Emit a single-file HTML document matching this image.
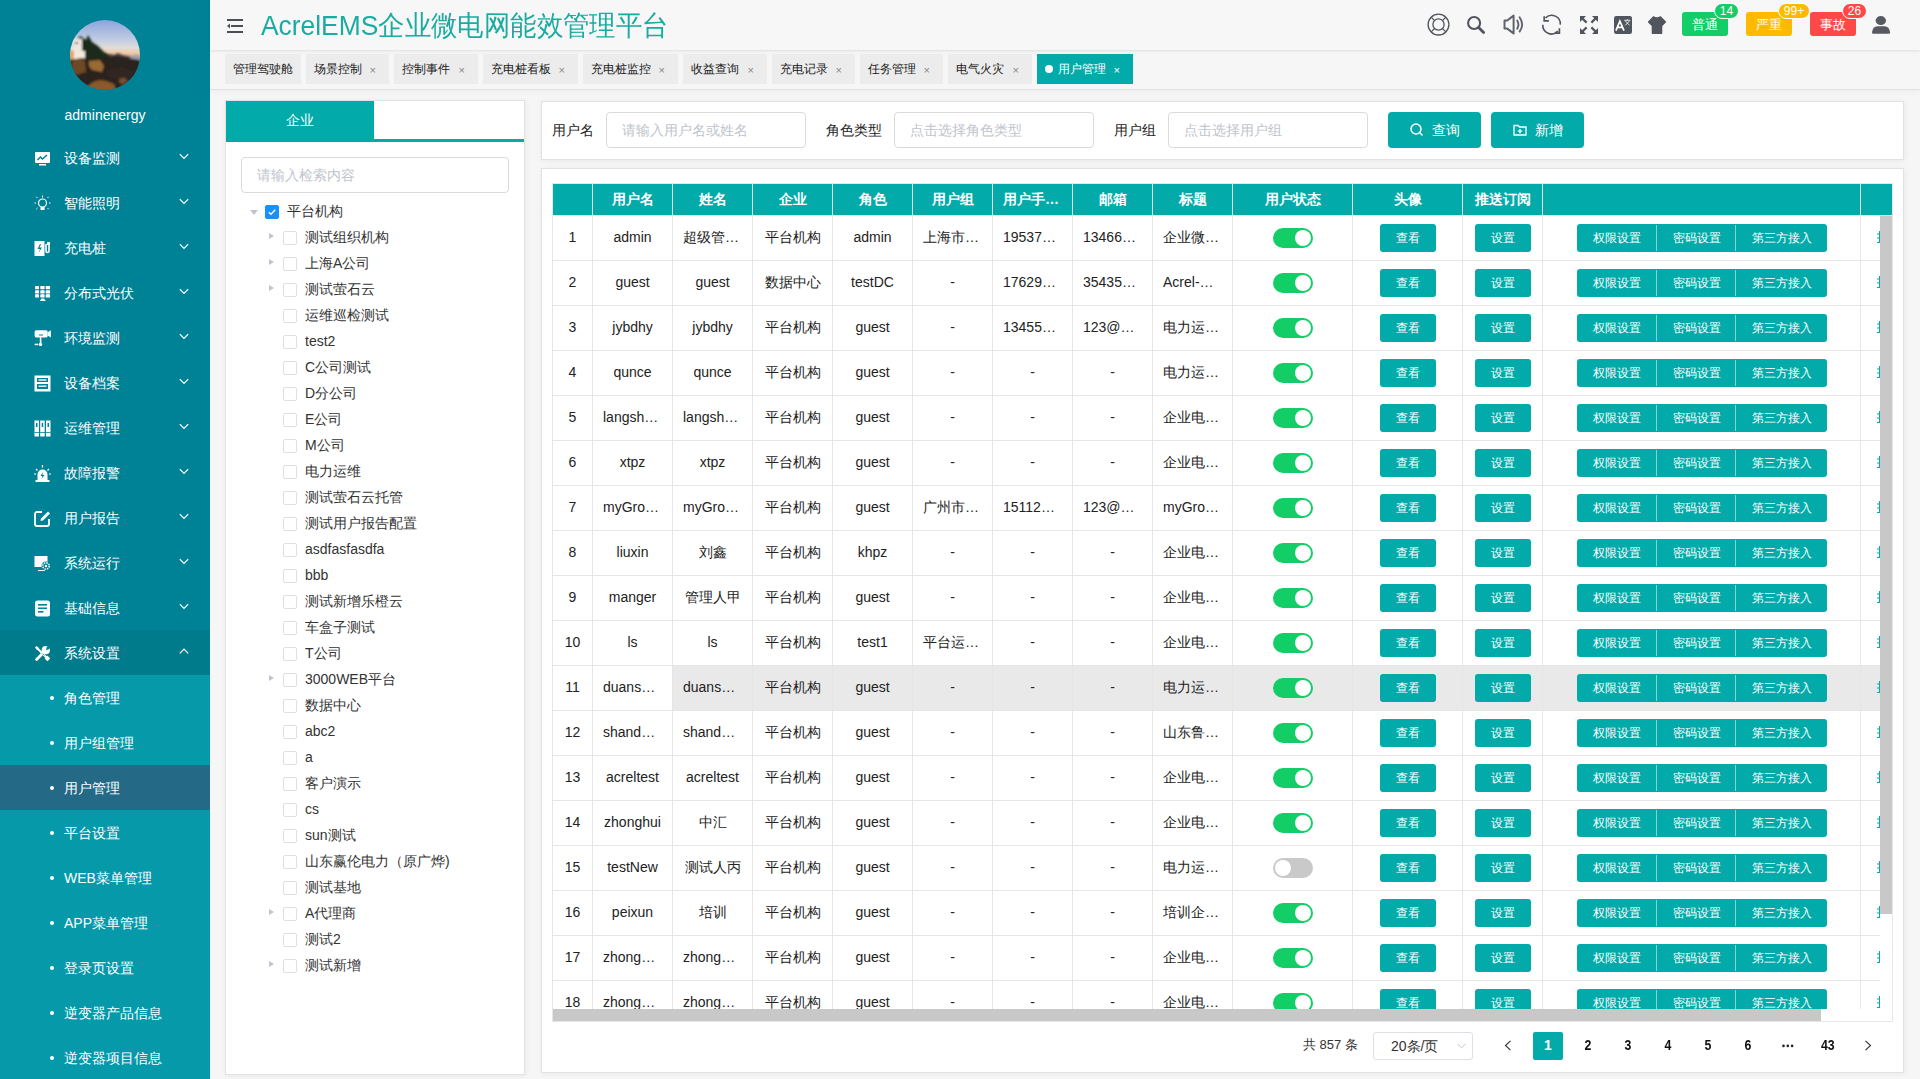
<!DOCTYPE html><html><head><meta charset="utf-8"><style>
*{box-sizing:border-box;margin:0;padding:0}
html,body{width:1920px;height:1079px;overflow:hidden}
body{position:relative;background:#f6f6f6;font-family:"Liberation Sans",sans-serif;color:#222}
.abs{position:absolute}
#side{position:absolute;left:0;top:0;width:210px;height:1079px;background:#008296;color:#fff}
#avatar{position:absolute;left:70px;top:20px;width:70px;height:70px;border-radius:50%;overflow:hidden}
#uname{position:absolute;left:0;width:210px;top:105px;text-align:center;font-size:14px;line-height:20px;color:#fff}
.mi{position:absolute;left:0;width:210px;height:45px;font-size:14px;line-height:45px;color:#fff}
.mi .ic{position:absolute;left:34px;top:15px;width:17px;height:17px}
.mi .tx{position:absolute;left:64px;top:1px}
.mi .chev{position:absolute;left:179px;top:18px;width:10px;height:7px}
.sub{position:absolute;left:0;width:210px;height:45px;font-size:14px;line-height:45px;color:#fff}
.sub .dot{position:absolute;left:50px;top:21px;width:4px;height:4px;border-radius:50%;background:#fff}
.sub .tx{position:absolute;left:64px;top:1px}
#header{position:absolute;left:210px;top:0;width:1710px;height:50px;background:#f7f7f7;box-shadow:0 1px 3px rgba(0,0,0,.10);z-index:2}
#title{position:absolute;left:51px;top:7px;font-size:28px;line-height:38px;color:#1aaba1;white-space:nowrap;transform:scaleX(0.942);transform-origin:0 0}
#tabs{position:absolute;left:210px;top:50px;width:1710px;height:40px;background:#f6f6f6;border-bottom:1px solid #e0e0e0;box-shadow:0 2px 6px rgba(0,0,0,.04)}
.tab{position:absolute;top:4px;height:30px;background:#ececec;font-size:12px;line-height:30px;color:#1a1a1a;padding-left:8px;white-space:nowrap}
.tab .x{position:absolute;right:13px;top:1px;font-size:11px;color:#888}
.tab.act{background:#02aba9;color:#fff}
.tab.act .x{color:#fff}
.panel{position:absolute;background:#fff;border:1px solid #e2e2e2;box-shadow:1px 1px 6px rgba(0,0,0,.06)}
.lbl{position:absolute;font-size:14px;line-height:20px;color:#222;margin-top:1px}
.inp{position:absolute;height:36px;border:1px solid #dadada;border-radius:4px;background:#fff;font-size:14px;line-height:34px;color:#c0c4cc;padding-left:15px}
.btn{position:absolute;height:36px;border-radius:4px;background:#02aba9;color:#fff;font-size:14px;line-height:36px}
table{border-collapse:collapse;table-layout:fixed}
.tree-row{position:absolute;left:0;height:26px;font-size:14px;line-height:26px;color:#333;white-space:nowrap}
.cb{position:absolute;width:14px;height:14px;border:1px solid #dcdfe6;border-radius:2px;background:#fff}
.td{position:absolute;height:44px;line-height:42px;text-align:center;font-size:14px;color:#222;white-space:nowrap;overflow:hidden}
.sw{position:absolute;width:40px;height:20px;border-radius:10px}
.sw span{position:absolute;top:2px;width:16px;height:16px;border-radius:50%;background:#fff}
.tb{position:absolute;height:28px;border-radius:3px;background:#02aba9;color:#fff;font-size:12px;line-height:29px;text-align:center}
.arr{position:absolute;width:0;height:0;border-top:3.5px solid transparent;border-bottom:3.5px solid transparent;border-left:5px solid #c0c4cc}
</style></head><body>
<div id="side">
<div id="avatar"><svg width="70" height="70" viewBox="0 0 70 70">
<defs><linearGradient id="sky" x1="0" y1="0" x2="0" y2="1"><stop offset="0" stop-color="#8aa4dc"/><stop offset="0.3" stop-color="#c4cfe2"/><stop offset="0.4" stop-color="#e2dcd8"/><stop offset="0.47" stop-color="#f0c9a4"/><stop offset="0.53" stop-color="#d9a890"/><stop offset="0.6" stop-color="#6a5a58"/></linearGradient>
<filter id="bl" x="-10%" y="-10%" width="120%" height="120%"><feGaussianBlur stdDeviation="1.1"/></filter></defs>
<rect width="70" height="70" fill="url(#sky)"/>
<g filter="url(#bl)">
<path d="M30 37 L40 34 L44 35 L48 33 L52 35 L62 37 L70 37 L70 42 L30 42Z" fill="#4a4040"/>
<path d="M60 37 L66 35 L70 36 L70 41 L60 41Z" fill="#9aa0b0"/>
<path d="M6 22 L10 16 L16 20 L18 15 L22 22 L28 26 L32 30 L34 32 L38 34 L40 38 L20 44 L8 42Z" fill="#1e2a1c"/>
<rect x="3" y="19" width="9" height="13" fill="#eee6dc"/>
<rect x="5" y="22" width="3" height="2" fill="#667"/>
<rect x="0" y="31" width="15" height="10" fill="#f2e8dc"/>
<rect x="0" y="31" width="4" height="10" fill="#e8a060"/>
<path d="M0 40 L12 38 L22 40 L34 38 L46 36 L58 38 L70 40 L70 70 L0 70Z" fill="#2a211c"/>
<path d="M2 42 Q8 36 15 41 L16 52 L6 55 L2 50Z" fill="#6e4826"/>
<path d="M19 41 L30 40 L34 46 L32 52 L22 50 L19 46Z" fill="#9a6a34"/>
<path d="M18 66 Q26 58 36 61 L44 64 L46 70 L18 70Z" fill="#8a5a2c"/>
<path d="M48 60 L54 57 L58 61 L52 65Z" fill="#7a5030"/>
<path d="M36 50 L52 47 L64 52 L60 58 L40 58Z" fill="#302822"/>
</g>
</svg></div>
<div id="uname">adminenergy</div>
<div class="mi" style="top:135px;"><svg class="ic" viewBox="0 0 17 17"><rect x="1" y="2" width="15" height="11" rx="1" fill="#fff"/><rect x="5" y="14" width="7" height="1.5" fill="#fff"/><path d="M3.5 10 L6.5 7 L8.5 9 L13 5" stroke="#008296" stroke-width="1.5" fill="none"/></svg><span class="tx">设备监测</span><svg class="chev" viewBox="0 0 10 7"><path d="M0.8 1.2 L5 5.4 L9.2 1.2" stroke="#fff" stroke-width="1.2" fill="none"/></svg></div>
<div class="mi" style="top:180px;"><svg class="ic" viewBox="0 0 17 17"><circle cx="8.5" cy="8" r="4" stroke="#fff" stroke-width="1.2" fill="none"/><rect x="6.5" y="12" width="4" height="3" fill="#fff"/><path d="M8.5 0.5v2M2 8H0.5M16.5 8H15M3.5 3L2.3 1.8M13.5 3l1.2-1.2M3.5 13l-1.2 1.2M13.5 13l1.2 1.2" stroke="#fff" stroke-width="1"/></svg><span class="tx">智能照明</span><svg class="chev" viewBox="0 0 10 7"><path d="M0.8 1.2 L5 5.4 L9.2 1.2" stroke="#fff" stroke-width="1.2" fill="none"/></svg></div>
<div class="mi" style="top:225px;"><svg class="ic" viewBox="0 0 17 17"><rect x="0.5" y="1" width="10" height="15" fill="#fff"/><path d="M6 4 L3.5 9 H6 L4.5 13 L8 7.5 H5.5 L7 4Z" fill="#008296"/><path d="M12 4v7a1.5 1.5 0 0 0 3 0V5" stroke="#fff" stroke-width="1.6" fill="none"/><rect x="13" y="2" width="3" height="3" fill="#fff"/></svg><span class="tx">充电桩</span><svg class="chev" viewBox="0 0 10 7"><path d="M0.8 1.2 L5 5.4 L9.2 1.2" stroke="#fff" stroke-width="1.2" fill="none"/></svg></div>
<div class="mi" style="top:270px;"><svg class="ic" viewBox="0 0 17 17"><g fill="#fff"><rect x="1.1" y="1" width="3.9" height="3.2" rx="0.6"/><rect x="6.3" y="1" width="4.3" height="3.2" rx="0.6"/><rect x="11.7" y="1" width="4.4" height="3.2" rx="0.6"/><rect x="1.1" y="5.3" width="3.9" height="3.2" rx="0.6"/><rect x="6.3" y="5.3" width="4.3" height="3.2" rx="0.6"/><rect x="11.7" y="5.3" width="4.4" height="3.2" rx="0.6"/><rect x="1.1" y="9.3" width="3.9" height="3.2" rx="0.6"/><rect x="6.3" y="9.3" width="4.3" height="3.2" rx="0.6"/><rect x="11.7" y="9.3" width="4.4" height="3.2" rx="0.6"/><path d="M7.5 13.6 H10 L11.8 16 H5.8Z"/></g></svg><span class="tx">分布式光伏</span><svg class="chev" viewBox="0 0 10 7"><path d="M0.8 1.2 L5 5.4 L9.2 1.2" stroke="#fff" stroke-width="1.2" fill="none"/></svg></div>
<div class="mi" style="top:315px;"><svg class="ic" viewBox="0 0 17 17"><g fill="#fff"><rect x="0.6" y="0.3" width="13.1" height="7.1" rx="1.6"/><path d="M13.7 2.2 L16.9 0.3 V7.4 L13.7 5.5Z"/><rect x="5.8" y="7.4" width="1.6" height="6"/><circle cx="6.5" cy="14.4" r="1.7"/><rect x="0.6" y="13.7" width="3.7" height="1.5"/></g><rect x="5" y="4.5" width="4" height="1" fill="#008296"/></svg><span class="tx">环境监测</span><svg class="chev" viewBox="0 0 10 7"><path d="M0.8 1.2 L5 5.4 L9.2 1.2" stroke="#fff" stroke-width="1.2" fill="none"/></svg></div>
<div class="mi" style="top:360px;"><svg class="ic" viewBox="0 0 17 17"><rect x="0.5" y="0.5" width="16" height="16" fill="#fff"/><rect x="3" y="3" width="11" height="4" fill="#008296"/><rect x="4.5" y="4.3" width="8" height="1.4" fill="#fff"/><rect x="3" y="9" width="11" height="5" fill="#008296"/><rect x="4.5" y="10.5" width="8" height="1.3" fill="#fff"/></svg><span class="tx">设备档案</span><svg class="chev" viewBox="0 0 10 7"><path d="M0.8 1.2 L5 5.4 L9.2 1.2" stroke="#fff" stroke-width="1.2" fill="none"/></svg></div>
<div class="mi" style="top:405px;"><svg class="ic" viewBox="0 0 17 17"><g fill="#fff"><rect x="0.5" y="0.5" width="4.5" height="16"/><rect x="6.2" y="0.5" width="4.5" height="16"/><rect x="12" y="0.5" width="4.5" height="16"/></g><g fill="#008296"><rect x="2" y="3" width="1.5" height="4"/><rect x="7.7" y="3" width="1.5" height="4"/><rect x="13.5" y="3" width="1.5" height="4"/><rect x="0.5" y="12" width="16" height="0.8"/></g></svg><span class="tx">运维管理</span><svg class="chev" viewBox="0 0 10 7"><path d="M0.8 1.2 L5 5.4 L9.2 1.2" stroke="#fff" stroke-width="1.2" fill="none"/></svg></div>
<div class="mi" style="top:450px;"><svg class="ic" viewBox="0 0 17 17"><path d="M3.5 16V9.5a5 5 0 0 1 10 0V16Z" fill="#fff"/><rect x="1.5" y="15" width="14" height="2" fill="#fff"/><path d="M9 7 L6.5 11 H8.5 L7.5 14 L10.5 10 H8.5Z" fill="#008296"/><path d="M8.5 0v2.5M2 4l1.5 1.5M15 4l-1.5 1.5M0 9h2M15 9h2" stroke="#fff" stroke-width="1.2"/></svg><span class="tx">故障报警</span><svg class="chev" viewBox="0 0 10 7"><path d="M0.8 1.2 L5 5.4 L9.2 1.2" stroke="#fff" stroke-width="1.2" fill="none"/></svg></div>
<div class="mi" style="top:495px;"><svg class="ic" viewBox="0 0 17 17"><path d="M8 2H3a2 2 0 0 0-2 2v10a2 2 0 0 0 2 2h10a2 2 0 0 0 2-2V9" stroke="#fff" stroke-width="1.8" fill="none"/><path d="M14 1.5 L16 3.5 L9 10.5 L6.5 11 L7 8.5Z" fill="#fff"/></svg><span class="tx">用户报告</span><svg class="chev" viewBox="0 0 10 7"><path d="M0.8 1.2 L5 5.4 L9.2 1.2" stroke="#fff" stroke-width="1.2" fill="none"/></svg></div>
<div class="mi" style="top:540px;"><svg class="ic" viewBox="0 0 17 17"><rect x="0.5" y="1" width="13" height="11" fill="#fff"/><rect x="4" y="15" width="7" height="1" fill="#fff"/><circle cx="12" cy="11" r="4.5" fill="#008296"/><circle cx="12" cy="11" r="3.2" stroke="#fff" stroke-width="1.4" fill="none" stroke-dasharray="1.5 1"/><circle cx="12" cy="11" r="1.2" fill="#fff"/></svg><span class="tx">系统运行</span><svg class="chev" viewBox="0 0 10 7"><path d="M0.8 1.2 L5 5.4 L9.2 1.2" stroke="#fff" stroke-width="1.2" fill="none"/></svg></div>
<div class="mi" style="top:585px;"><svg class="ic" viewBox="0 0 17 17"><rect x="1" y="0.5" width="15" height="16" rx="2.5" fill="#fff"/><g fill="#008296"><rect x="4" y="4" width="9" height="1.6"/><rect x="4" y="7.5" width="9" height="1.6"/><rect x="4" y="11" width="5.5" height="1.6"/></g></svg><span class="tx">基础信息</span><svg class="chev" viewBox="0 0 10 7"><path d="M0.8 1.2 L5 5.4 L9.2 1.2" stroke="#fff" stroke-width="1.2" fill="none"/></svg></div>
<div class="mi" style="top:630px;background:#007b8c;"><svg class="ic" viewBox="0 0 17 17"><path d="M2.6 14.4 L9.2 7.8" stroke="#fff" stroke-width="2.8" stroke-linecap="round"/><circle cx="11.8" cy="5.2" r="4.1" fill="#fff"/><circle cx="14.2" cy="2.8" r="1.7" fill="#008296"/><path d="M12.3 4.7 L15.5 1.5" stroke="#008296" stroke-width="1.6"/><path d="M3 3 L13 13" stroke="#fff" stroke-width="2"/><path d="M1 2.5 L2.5 1 L5 3 L3 5Z" fill="#fff"/><path d="M13.4 10.6 L16.2 13.4 L13.4 16.2 L10.6 13.4Z" fill="#fff"/><path d="M8.5 8.5 L10.5 10.5" stroke="#008296" stroke-width="0.8"/></svg><span class="tx">系统设置</span><svg class="chev" viewBox="0 0 10 7"><path d="M0.8 5.4 L5 1.2 L9.2 5.4" stroke="#fff" stroke-width="1.2" fill="none"/></svg></div>
<div class="abs" style="left:0;top:675px;width:210px;height:404px;background:#0599a9"></div>
<div class="sub" style="top:675px;"><span class="dot"></span><span class="tx">角色管理</span></div>
<div class="sub" style="top:720px;"><span class="dot"></span><span class="tx">用户组管理</span></div>
<div class="sub" style="top:765px;background:#246a87;"><span class="dot"></span><span class="tx">用户管理</span></div>
<div class="sub" style="top:810px;"><span class="dot"></span><span class="tx">平台设置</span></div>
<div class="sub" style="top:855px;"><span class="dot"></span><span class="tx">WEB菜单管理</span></div>
<div class="sub" style="top:900px;"><span class="dot"></span><span class="tx">APP菜单管理</span></div>
<div class="sub" style="top:945px;"><span class="dot"></span><span class="tx">登录页设置</span></div>
<div class="sub" style="top:990px;"><span class="dot"></span><span class="tx">逆变器产品信息</span></div>
<div class="sub" style="top:1035px;"><span class="dot"></span><span class="tx">逆变器项目信息</span></div>
</div>
<div id="header">
<svg class="abs" style="left:17px;top:19px" width="16" height="14" viewBox="0 0 16 14"><g fill="#4a4e57"><rect x="0" y="0" width="16" height="2"/><rect x="4" y="6" width="12" height="2"/><rect x="0" y="12" width="16" height="2"/><path d="M0 7 L3 4.5 V9.5Z"/></g></svg>
<div id="title">AcrelEMS企业微电网能效管理平台</div>
<svg class="abs" style="left:1190px;top:0" width="520" height="50" viewBox="1400 0 520 50">
<g fill="none" stroke="#50555e">
<circle cx="1438.5" cy="24.6" r="10.4" stroke-width="1.3"/>
<circle cx="1438.5" cy="24.5" r="5.6" stroke-width="1.3"/>
<path d="M1431.2 17.3L1434.6 20.6M1445.8 17.3L1442.4 20.6M1431.2 31.9L1434.6 28.5M1445.8 31.9L1442.4 28.5" stroke-width="1.2"/>
<circle cx="1474.1" cy="23" r="6" stroke-width="2.1"/>
<path d="M1478.6 27.6L1483.6 32.6" stroke-width="2.8" stroke-linecap="round"/>
<path d="M1504.5 20.5H1507.2L1513.6 15.6V33.4L1507.2 28.6H1504.5Z" stroke="#5f646c" stroke-width="2" stroke-linejoin="round"/>
<path d="M1517.2 20.6Q1519.6 24.6 1517.2 28.8M1519.6 17.2Q1524.6 24.6 1519.6 31.6" stroke="#5f646c" stroke-width="1.9" stroke-linecap="round"/>
<path d="M1545.6 17.9A8.6 8.6 0 0 1 1560.3 24.6M1542.8 24.8A8.6 8.6 0 0 0 1557.8 31.1" stroke-width="1.6"/>
<path d="M1544.2 16.3V20.9H1548.9M1559.4 28.2V33.2H1554.6" stroke-width="1.7"/>
</g>
<g fill="#50555e">
<path d="M1580 16H1586L1580 22Z"/><path d="M1598 16H1592L1598 22Z"/><path d="M1580 34H1586L1580 28Z"/><path d="M1598 34H1592L1598 28Z"/>
</g>
<path d="M1582 18L1586.6 22.6M1596 18L1591.4 22.6M1582 32L1586.6 27.4M1596 32L1591.4 27.4" stroke="#50555e" stroke-width="2.2"/>
<rect x="1614" y="16" width="18" height="18" rx="2.2" fill="#50555e"/>
<path d="M1615.9 30.6L1619.9 21.1L1624 30.6M1617.3 27.3H1622.5" stroke="#fff" stroke-width="1.7" fill="none"/>
<path d="M1624.2 20.3H1630.4M1627.3 19.2V20.3M1625.2 20.8L1629.6 25.4M1629.6 20.8L1625.2 25.4" stroke="#fff" stroke-width="0.8" fill="none"/>
<path d="M1653.4 16Q1657 18.6 1660.5 16L1665.9 21.4Q1666.4 22 1665.9 22.5L1662.3 25.9V33.3Q1662.3 34 1661.6 34H1652.4Q1651.7 34 1651.7 33.3V25.9L1648.1 22.5Q1647.6 22 1648.1 21.4Z" fill="#50555e"/>
<ellipse cx="1880.8" cy="20.6" rx="5.2" ry="4.5" fill="#555a63"/>
<path d="M1872 32.6Q1872.8 26.2 1877.3 26.2H1884.5Q1889.3 26.2 1890.1 32.6Q1890.1 33.8 1888.8 33.8H1873.3Q1872 33.8 1872 32.6Z" fill="#555a63"/>
</svg>
<div class="abs" style="left:1472px;top:12px;width:46px;height:24px;border-radius:3px;background:#13ce66;color:#fff;font-size:13px;line-height:25px;text-align:center">普通</div>
<div class="abs" style="left:1504px;top:3px;width:25px;height:16px;border-radius:8px;background:#13ce66;border:1px solid #fff;color:#fff;font-size:12px;line-height:14px;text-align:center">14</div>
<div class="abs" style="left:1536px;top:12px;width:46px;height:24px;border-radius:3px;background:#ffba00;color:#fff;font-size:13px;line-height:25px;text-align:center">严重</div>
<div class="abs" style="left:1568px;top:3px;width:32px;height:16px;border-radius:8px;background:#ffba00;border:1px solid #fff;color:#fff;font-size:12px;line-height:14px;text-align:center">99+</div>
<div class="abs" style="left:1600px;top:12px;width:46px;height:24px;border-radius:3px;background:#ff4949;color:#fff;font-size:13px;line-height:25px;text-align:center">事故</div>
<div class="abs" style="left:1632px;top:3px;width:25px;height:16px;border-radius:8px;background:#ff4949;border:1px solid #fff;color:#fff;font-size:12px;line-height:14px;text-align:center">26</div>
</div>
<div id="tabs">
<div class="tab" style="left:15px;width:76px">管理驾驶舱</div>
<div class="tab" style="left:96px;width:83px">场景控制<span class="x">×</span></div>
<div class="tab" style="left:184px;width:84px">控制事件<span class="x">×</span></div>
<div class="tab" style="left:273px;width:95px">充电桩看板<span class="x">×</span></div>
<div class="tab" style="left:373px;width:95px">充电桩监控<span class="x">×</span></div>
<div class="tab" style="left:473px;width:84px">收益查询<span class="x">×</span></div>
<div class="tab" style="left:562px;width:83px">充电记录<span class="x">×</span></div>
<div class="tab" style="left:650px;width:83px">任务管理<span class="x">×</span></div>
<div class="tab" style="left:738px;width:84px">电气火灾<span class="x">×</span></div>
<div class="tab act" style="left:827px;width:96px"><span style="display:inline-block;width:8px;height:8px;border-radius:50%;background:#fff;margin-right:5px;vertical-align:0px"></span>用户管理<span class="x">×</span></div>
</div>
<div class="panel" style="left:225px;top:100px;width:300px;height:975px">
<div class="abs" style="left:0;top:0;width:148px;height:38px;background:#02aba9;color:#fff;font-size:14px;line-height:38px;text-align:center">企业</div>
<div class="abs" style="left:0;top:38px;width:298px;height:3px;background:#02aba9"></div>
<div class="inp" style="left:15px;top:56px;width:268px;height:36px;line-height:34px">请输入检索内容</div>
<div class="abs" style="left:24px;top:109px;width:0;height:0;border-left:4px solid transparent;border-right:4px solid transparent;border-top:5px solid #c0c4cc"></div>
<div class="cb" style="left:39px;top:104px;background:#1890ff;border-color:#1890ff"><svg width="12" height="12" viewBox="0 0 12 12" style="position:absolute;left:0;top:0"><path d="M2.8 6.2 L5 8.3 L9.2 3.8" stroke="#fff" stroke-width="1.4" fill="none"/></svg></div>
<div class="tree-row" style="left:61px;top:97px">平台机构</div>
<div class="arr" style="left:43px;top:132px"></div>
<div class="cb" style="left:57px;top:130px"></div>
<div class="tree-row" style="left:79px;top:123px">测试组织机构</div>
<div class="arr" style="left:43px;top:158px"></div>
<div class="cb" style="left:57px;top:156px"></div>
<div class="tree-row" style="left:79px;top:149px">上海A公司</div>
<div class="arr" style="left:43px;top:184px"></div>
<div class="cb" style="left:57px;top:182px"></div>
<div class="tree-row" style="left:79px;top:175px">测试萤石云</div>
<div class="cb" style="left:57px;top:208px"></div>
<div class="tree-row" style="left:79px;top:201px">运维巡检测试</div>
<div class="cb" style="left:57px;top:234px"></div>
<div class="tree-row" style="left:79px;top:227px">test2</div>
<div class="cb" style="left:57px;top:260px"></div>
<div class="tree-row" style="left:79px;top:253px">C公司测试</div>
<div class="cb" style="left:57px;top:286px"></div>
<div class="tree-row" style="left:79px;top:279px">D分公司</div>
<div class="cb" style="left:57px;top:312px"></div>
<div class="tree-row" style="left:79px;top:305px">E公司</div>
<div class="cb" style="left:57px;top:338px"></div>
<div class="tree-row" style="left:79px;top:331px">M公司</div>
<div class="cb" style="left:57px;top:364px"></div>
<div class="tree-row" style="left:79px;top:357px">电力运维</div>
<div class="cb" style="left:57px;top:390px"></div>
<div class="tree-row" style="left:79px;top:383px">测试萤石云托管</div>
<div class="cb" style="left:57px;top:416px"></div>
<div class="tree-row" style="left:79px;top:409px">测试用户报告配置</div>
<div class="cb" style="left:57px;top:442px"></div>
<div class="tree-row" style="left:79px;top:435px">asdfasfasdfa</div>
<div class="cb" style="left:57px;top:468px"></div>
<div class="tree-row" style="left:79px;top:461px">bbb</div>
<div class="cb" style="left:57px;top:494px"></div>
<div class="tree-row" style="left:79px;top:487px">测试新增乐橙云</div>
<div class="cb" style="left:57px;top:520px"></div>
<div class="tree-row" style="left:79px;top:513px">车盒子测试</div>
<div class="cb" style="left:57px;top:546px"></div>
<div class="tree-row" style="left:79px;top:539px">T公司</div>
<div class="arr" style="left:43px;top:574px"></div>
<div class="cb" style="left:57px;top:572px"></div>
<div class="tree-row" style="left:79px;top:565px">3000WEB平台</div>
<div class="cb" style="left:57px;top:598px"></div>
<div class="tree-row" style="left:79px;top:591px">数据中心</div>
<div class="cb" style="left:57px;top:624px"></div>
<div class="tree-row" style="left:79px;top:617px">abc2</div>
<div class="cb" style="left:57px;top:650px"></div>
<div class="tree-row" style="left:79px;top:643px">a</div>
<div class="cb" style="left:57px;top:676px"></div>
<div class="tree-row" style="left:79px;top:669px">客户演示</div>
<div class="cb" style="left:57px;top:702px"></div>
<div class="tree-row" style="left:79px;top:695px">cs</div>
<div class="cb" style="left:57px;top:728px"></div>
<div class="tree-row" style="left:79px;top:721px">sun测试</div>
<div class="cb" style="left:57px;top:754px"></div>
<div class="tree-row" style="left:79px;top:747px">山东赢伦电力（原广烨)</div>
<div class="cb" style="left:57px;top:780px"></div>
<div class="tree-row" style="left:79px;top:773px">测试基地</div>
<div class="arr" style="left:43px;top:808px"></div>
<div class="cb" style="left:57px;top:806px"></div>
<div class="tree-row" style="left:79px;top:799px">A代理商</div>
<div class="cb" style="left:57px;top:832px"></div>
<div class="tree-row" style="left:79px;top:825px">测试2</div>
<div class="arr" style="left:43px;top:860px"></div>
<div class="cb" style="left:57px;top:858px"></div>
<div class="tree-row" style="left:79px;top:851px">测试新增</div>
</div>
<div class="panel" style="left:541px;top:101px;width:1363px;height:59px">
<div class="lbl" style="left:10px;top:17px">用户名</div>
<div class="inp" style="left:64px;top:10px;width:200px">请输入用户名或姓名</div>
<div class="lbl" style="left:284px;top:17px">角色类型</div>
<div class="inp" style="left:352px;top:10px;width:200px">点击选择角色类型</div>
<div class="lbl" style="left:572px;top:17px">用户组</div>
<div class="inp" style="left:626px;top:10px;width:200px">点击选择用户组</div>
<div class="btn" style="left:846px;top:10px;width:93px"><svg class="abs" style="left:22px;top:11px" width="14" height="14" viewBox="0 0 14 14"><circle cx="6" cy="6" r="5" stroke="#fff" stroke-width="1.5" fill="none"/><path d="M9.8 9.8 L12.5 12.5" stroke="#fff" stroke-width="1.5"/></svg><span class="abs" style="left:44px;top:0">查询</span></div>
<div class="btn" style="left:949px;top:10px;width:93px"><svg class="abs" style="left:22px;top:11px" width="14" height="14" viewBox="0 0 14 14"><path d="M1 2.5h4l1.5 1.5H13v8H1Z" stroke="#fff" stroke-width="1.3" fill="none"/><path d="M7 6v4.5M4.8 8.2h4.4" stroke="#fff" stroke-width="1.3"/></svg><span class="abs" style="left:44px;top:0">新增</span></div>
</div>
<div class="panel" style="left:541px;top:168px;width:1363px;height:905px"></div>
<div class="abs" style="left:552px;top:183px;width:1341px;height:839px;border:1px solid #e6e6e6"></div>
<div class="abs" style="left:553px;top:184px;width:1339px;height:31px;background:#02aba9"></div>
<div class="abs" style="left:592px;top:184px;width:1px;height:31px;background:#e4e4e4"></div>
<div class="abs" style="left:672px;top:184px;width:1px;height:31px;background:#e4e4e4"></div>
<div class="abs th" style="left:593px;top:184px;width:79px;height:31px;line-height:31px;text-align:center;padding-left:0px;color:#fff;font-weight:bold;font-size:14px;white-space:nowrap;overflow:hidden">用户名</div>
<div class="abs" style="left:752px;top:184px;width:1px;height:31px;background:#e4e4e4"></div>
<div class="abs th" style="left:673px;top:184px;width:79px;height:31px;line-height:31px;text-align:center;padding-left:0px;color:#fff;font-weight:bold;font-size:14px;white-space:nowrap;overflow:hidden">姓名</div>
<div class="abs" style="left:832px;top:184px;width:1px;height:31px;background:#e4e4e4"></div>
<div class="abs th" style="left:753px;top:184px;width:79px;height:31px;line-height:31px;text-align:center;padding-left:0px;color:#fff;font-weight:bold;font-size:14px;white-space:nowrap;overflow:hidden">企业</div>
<div class="abs" style="left:912px;top:184px;width:1px;height:31px;background:#e4e4e4"></div>
<div class="abs th" style="left:833px;top:184px;width:79px;height:31px;line-height:31px;text-align:center;padding-left:0px;color:#fff;font-weight:bold;font-size:14px;white-space:nowrap;overflow:hidden">角色</div>
<div class="abs" style="left:992px;top:184px;width:1px;height:31px;background:#e4e4e4"></div>
<div class="abs th" style="left:913px;top:184px;width:79px;height:31px;line-height:31px;text-align:center;padding-left:0px;color:#fff;font-weight:bold;font-size:14px;white-space:nowrap;overflow:hidden">用户组</div>
<div class="abs" style="left:1072px;top:184px;width:1px;height:31px;background:#e4e4e4"></div>
<div class="abs th" style="left:993px;top:184px;width:79px;height:31px;line-height:31px;text-align:left;padding-left:10px;color:#fff;font-weight:bold;font-size:14px;white-space:nowrap;overflow:hidden">用户手…</div>
<div class="abs" style="left:1152px;top:184px;width:1px;height:31px;background:#e4e4e4"></div>
<div class="abs th" style="left:1073px;top:184px;width:79px;height:31px;line-height:31px;text-align:center;padding-left:0px;color:#fff;font-weight:bold;font-size:14px;white-space:nowrap;overflow:hidden">邮箱</div>
<div class="abs" style="left:1232px;top:184px;width:1px;height:31px;background:#e4e4e4"></div>
<div class="abs th" style="left:1153px;top:184px;width:79px;height:31px;line-height:31px;text-align:center;padding-left:0px;color:#fff;font-weight:bold;font-size:14px;white-space:nowrap;overflow:hidden">标题</div>
<div class="abs" style="left:1352px;top:184px;width:1px;height:31px;background:#e4e4e4"></div>
<div class="abs th" style="left:1233px;top:184px;width:119px;height:31px;line-height:31px;text-align:center;padding-left:0px;color:#fff;font-weight:bold;font-size:14px;white-space:nowrap;overflow:hidden">用户状态</div>
<div class="abs" style="left:1462px;top:184px;width:1px;height:31px;background:#e4e4e4"></div>
<div class="abs th" style="left:1353px;top:184px;width:109px;height:31px;line-height:31px;text-align:center;padding-left:0px;color:#fff;font-weight:bold;font-size:14px;white-space:nowrap;overflow:hidden">头像</div>
<div class="abs" style="left:1542px;top:184px;width:1px;height:31px;background:#e4e4e4"></div>
<div class="abs th" style="left:1463px;top:184px;width:79px;height:31px;line-height:31px;text-align:center;padding-left:0px;color:#fff;font-weight:bold;font-size:14px;white-space:nowrap;overflow:hidden">推送订阅</div>
<div class="abs" style="left:1860px;top:184px;width:1px;height:31px;background:#e4e4e4"></div>
<div class="abs" style="left:553px;top:215px;width:1339px;height:1px;background:#e6e6e6"></div>
<div class="abs" style="left:553px;top:216px;width:1327px;height:793px;overflow:hidden">
<div class="abs" style="left:0;top:44px;width:1339px;height:1px;background:#e6e6e6"></div>
<div class="abs td" style="left:0px;top:0px;width:39px;">1</div>
<div class="abs td" style="left:40px;top:0px;width:79px;">admin</div>
<div class="abs td" style="left:120px;top:0px;width:79px;text-align:left;padding-left:10px;">超级管…</div>
<div class="abs td" style="left:200px;top:0px;width:79px;">平台机构</div>
<div class="abs td" style="left:280px;top:0px;width:79px;">admin</div>
<div class="abs td" style="left:360px;top:0px;width:79px;text-align:left;padding-left:10px;">上海市…</div>
<div class="abs td" style="left:440px;top:0px;width:79px;text-align:left;padding-left:10px;">19537…</div>
<div class="abs td" style="left:520px;top:0px;width:79px;text-align:left;padding-left:10px;">13466…</div>
<div class="abs td" style="left:600px;top:0px;width:79px;text-align:left;padding-left:10px;">企业微…</div>
<div class="abs sw" style="left:720px;top:12px;background:#13ce66"><span style="left:22px"></span></div>
<div class="abs tb" style="left:827px;top:8px;width:56px">查看</div>
<div class="abs tb" style="left:922px;top:8px;width:56px">设置</div>
<div class="abs tb" style="left:1024px;top:8px;width:250px;padding:0"><span class="abs" style="left:0;width:79px;text-align:center">权限设置</span><span class="abs" style="left:79px;top:1px;width:1px;height:26px;background:#80d5d3"></span><span class="abs" style="left:80px;width:79px;text-align:center">密码设置</span><span class="abs" style="left:158px;top:1px;width:1px;height:26px;background:#80d5d3"></span><span class="abs" style="left:159px;width:91px;text-align:center">第三方接入</span></div>
<svg class="abs" style="left:1323px;top:15px" width="4" height="13" viewBox="0 0 4 13"><path d="M3.5 0V12M1 3H3.5M1 7H3.5M1 11.5H3.5" stroke="#02aba9" stroke-width="1" fill="none"/></svg>
<div class="abs" style="left:0;top:89px;width:1339px;height:1px;background:#e6e6e6"></div>
<div class="abs td" style="left:0px;top:45px;width:39px;">2</div>
<div class="abs td" style="left:40px;top:45px;width:79px;">guest</div>
<div class="abs td" style="left:120px;top:45px;width:79px;">guest</div>
<div class="abs td" style="left:200px;top:45px;width:79px;">数据中心</div>
<div class="abs td" style="left:280px;top:45px;width:79px;">testDC</div>
<div class="abs td" style="left:360px;top:45px;width:79px;">-</div>
<div class="abs td" style="left:440px;top:45px;width:79px;text-align:left;padding-left:10px;">17629…</div>
<div class="abs td" style="left:520px;top:45px;width:79px;text-align:left;padding-left:10px;">35435…</div>
<div class="abs td" style="left:600px;top:45px;width:79px;text-align:left;padding-left:10px;">Acrel-…</div>
<div class="abs sw" style="left:720px;top:57px;background:#13ce66"><span style="left:22px"></span></div>
<div class="abs tb" style="left:827px;top:53px;width:56px">查看</div>
<div class="abs tb" style="left:922px;top:53px;width:56px">设置</div>
<div class="abs tb" style="left:1024px;top:53px;width:250px;padding:0"><span class="abs" style="left:0;width:79px;text-align:center">权限设置</span><span class="abs" style="left:79px;top:1px;width:1px;height:26px;background:#80d5d3"></span><span class="abs" style="left:80px;width:79px;text-align:center">密码设置</span><span class="abs" style="left:158px;top:1px;width:1px;height:26px;background:#80d5d3"></span><span class="abs" style="left:159px;width:91px;text-align:center">第三方接入</span></div>
<svg class="abs" style="left:1323px;top:60px" width="4" height="13" viewBox="0 0 4 13"><path d="M3.5 0V12M1 3H3.5M1 7H3.5M1 11.5H3.5" stroke="#02aba9" stroke-width="1" fill="none"/></svg>
<div class="abs" style="left:0;top:134px;width:1339px;height:1px;background:#e6e6e6"></div>
<div class="abs td" style="left:0px;top:90px;width:39px;">3</div>
<div class="abs td" style="left:40px;top:90px;width:79px;">jybdhy</div>
<div class="abs td" style="left:120px;top:90px;width:79px;">jybdhy</div>
<div class="abs td" style="left:200px;top:90px;width:79px;">平台机构</div>
<div class="abs td" style="left:280px;top:90px;width:79px;">guest</div>
<div class="abs td" style="left:360px;top:90px;width:79px;">-</div>
<div class="abs td" style="left:440px;top:90px;width:79px;text-align:left;padding-left:10px;">13455…</div>
<div class="abs td" style="left:520px;top:90px;width:79px;text-align:left;padding-left:10px;">123@…</div>
<div class="abs td" style="left:600px;top:90px;width:79px;text-align:left;padding-left:10px;">电力运…</div>
<div class="abs sw" style="left:720px;top:102px;background:#13ce66"><span style="left:22px"></span></div>
<div class="abs tb" style="left:827px;top:98px;width:56px">查看</div>
<div class="abs tb" style="left:922px;top:98px;width:56px">设置</div>
<div class="abs tb" style="left:1024px;top:98px;width:250px;padding:0"><span class="abs" style="left:0;width:79px;text-align:center">权限设置</span><span class="abs" style="left:79px;top:1px;width:1px;height:26px;background:#80d5d3"></span><span class="abs" style="left:80px;width:79px;text-align:center">密码设置</span><span class="abs" style="left:158px;top:1px;width:1px;height:26px;background:#80d5d3"></span><span class="abs" style="left:159px;width:91px;text-align:center">第三方接入</span></div>
<svg class="abs" style="left:1323px;top:105px" width="4" height="13" viewBox="0 0 4 13"><path d="M3.5 0V12M1 3H3.5M1 7H3.5M1 11.5H3.5" stroke="#02aba9" stroke-width="1" fill="none"/></svg>
<div class="abs" style="left:0;top:179px;width:1339px;height:1px;background:#e6e6e6"></div>
<div class="abs td" style="left:0px;top:135px;width:39px;">4</div>
<div class="abs td" style="left:40px;top:135px;width:79px;">qunce</div>
<div class="abs td" style="left:120px;top:135px;width:79px;">qunce</div>
<div class="abs td" style="left:200px;top:135px;width:79px;">平台机构</div>
<div class="abs td" style="left:280px;top:135px;width:79px;">guest</div>
<div class="abs td" style="left:360px;top:135px;width:79px;">-</div>
<div class="abs td" style="left:440px;top:135px;width:79px;">-</div>
<div class="abs td" style="left:520px;top:135px;width:79px;">-</div>
<div class="abs td" style="left:600px;top:135px;width:79px;text-align:left;padding-left:10px;">电力运…</div>
<div class="abs sw" style="left:720px;top:147px;background:#13ce66"><span style="left:22px"></span></div>
<div class="abs tb" style="left:827px;top:143px;width:56px">查看</div>
<div class="abs tb" style="left:922px;top:143px;width:56px">设置</div>
<div class="abs tb" style="left:1024px;top:143px;width:250px;padding:0"><span class="abs" style="left:0;width:79px;text-align:center">权限设置</span><span class="abs" style="left:79px;top:1px;width:1px;height:26px;background:#80d5d3"></span><span class="abs" style="left:80px;width:79px;text-align:center">密码设置</span><span class="abs" style="left:158px;top:1px;width:1px;height:26px;background:#80d5d3"></span><span class="abs" style="left:159px;width:91px;text-align:center">第三方接入</span></div>
<svg class="abs" style="left:1323px;top:150px" width="4" height="13" viewBox="0 0 4 13"><path d="M3.5 0V12M1 3H3.5M1 7H3.5M1 11.5H3.5" stroke="#02aba9" stroke-width="1" fill="none"/></svg>
<div class="abs" style="left:0;top:224px;width:1339px;height:1px;background:#e6e6e6"></div>
<div class="abs td" style="left:0px;top:180px;width:39px;">5</div>
<div class="abs td" style="left:40px;top:180px;width:79px;text-align:left;padding-left:10px;">langsh…</div>
<div class="abs td" style="left:120px;top:180px;width:79px;text-align:left;padding-left:10px;">langsh…</div>
<div class="abs td" style="left:200px;top:180px;width:79px;">平台机构</div>
<div class="abs td" style="left:280px;top:180px;width:79px;">guest</div>
<div class="abs td" style="left:360px;top:180px;width:79px;">-</div>
<div class="abs td" style="left:440px;top:180px;width:79px;">-</div>
<div class="abs td" style="left:520px;top:180px;width:79px;">-</div>
<div class="abs td" style="left:600px;top:180px;width:79px;text-align:left;padding-left:10px;">企业电…</div>
<div class="abs sw" style="left:720px;top:192px;background:#13ce66"><span style="left:22px"></span></div>
<div class="abs tb" style="left:827px;top:188px;width:56px">查看</div>
<div class="abs tb" style="left:922px;top:188px;width:56px">设置</div>
<div class="abs tb" style="left:1024px;top:188px;width:250px;padding:0"><span class="abs" style="left:0;width:79px;text-align:center">权限设置</span><span class="abs" style="left:79px;top:1px;width:1px;height:26px;background:#80d5d3"></span><span class="abs" style="left:80px;width:79px;text-align:center">密码设置</span><span class="abs" style="left:158px;top:1px;width:1px;height:26px;background:#80d5d3"></span><span class="abs" style="left:159px;width:91px;text-align:center">第三方接入</span></div>
<svg class="abs" style="left:1323px;top:195px" width="4" height="13" viewBox="0 0 4 13"><path d="M3.5 0V12M1 3H3.5M1 7H3.5M1 11.5H3.5" stroke="#02aba9" stroke-width="1" fill="none"/></svg>
<div class="abs" style="left:0;top:269px;width:1339px;height:1px;background:#e6e6e6"></div>
<div class="abs td" style="left:0px;top:225px;width:39px;">6</div>
<div class="abs td" style="left:40px;top:225px;width:79px;">xtpz</div>
<div class="abs td" style="left:120px;top:225px;width:79px;">xtpz</div>
<div class="abs td" style="left:200px;top:225px;width:79px;">平台机构</div>
<div class="abs td" style="left:280px;top:225px;width:79px;">guest</div>
<div class="abs td" style="left:360px;top:225px;width:79px;">-</div>
<div class="abs td" style="left:440px;top:225px;width:79px;">-</div>
<div class="abs td" style="left:520px;top:225px;width:79px;">-</div>
<div class="abs td" style="left:600px;top:225px;width:79px;text-align:left;padding-left:10px;">企业电…</div>
<div class="abs sw" style="left:720px;top:237px;background:#13ce66"><span style="left:22px"></span></div>
<div class="abs tb" style="left:827px;top:233px;width:56px">查看</div>
<div class="abs tb" style="left:922px;top:233px;width:56px">设置</div>
<div class="abs tb" style="left:1024px;top:233px;width:250px;padding:0"><span class="abs" style="left:0;width:79px;text-align:center">权限设置</span><span class="abs" style="left:79px;top:1px;width:1px;height:26px;background:#80d5d3"></span><span class="abs" style="left:80px;width:79px;text-align:center">密码设置</span><span class="abs" style="left:158px;top:1px;width:1px;height:26px;background:#80d5d3"></span><span class="abs" style="left:159px;width:91px;text-align:center">第三方接入</span></div>
<svg class="abs" style="left:1323px;top:240px" width="4" height="13" viewBox="0 0 4 13"><path d="M3.5 0V12M1 3H3.5M1 7H3.5M1 11.5H3.5" stroke="#02aba9" stroke-width="1" fill="none"/></svg>
<div class="abs" style="left:0;top:314px;width:1339px;height:1px;background:#e6e6e6"></div>
<div class="abs td" style="left:0px;top:270px;width:39px;">7</div>
<div class="abs td" style="left:40px;top:270px;width:79px;text-align:left;padding-left:10px;">myGro…</div>
<div class="abs td" style="left:120px;top:270px;width:79px;text-align:left;padding-left:10px;">myGro…</div>
<div class="abs td" style="left:200px;top:270px;width:79px;">平台机构</div>
<div class="abs td" style="left:280px;top:270px;width:79px;">guest</div>
<div class="abs td" style="left:360px;top:270px;width:79px;text-align:left;padding-left:10px;">广州市…</div>
<div class="abs td" style="left:440px;top:270px;width:79px;text-align:left;padding-left:10px;">15112…</div>
<div class="abs td" style="left:520px;top:270px;width:79px;text-align:left;padding-left:10px;">123@…</div>
<div class="abs td" style="left:600px;top:270px;width:79px;text-align:left;padding-left:10px;">myGro…</div>
<div class="abs sw" style="left:720px;top:282px;background:#13ce66"><span style="left:22px"></span></div>
<div class="abs tb" style="left:827px;top:278px;width:56px">查看</div>
<div class="abs tb" style="left:922px;top:278px;width:56px">设置</div>
<div class="abs tb" style="left:1024px;top:278px;width:250px;padding:0"><span class="abs" style="left:0;width:79px;text-align:center">权限设置</span><span class="abs" style="left:79px;top:1px;width:1px;height:26px;background:#80d5d3"></span><span class="abs" style="left:80px;width:79px;text-align:center">密码设置</span><span class="abs" style="left:158px;top:1px;width:1px;height:26px;background:#80d5d3"></span><span class="abs" style="left:159px;width:91px;text-align:center">第三方接入</span></div>
<svg class="abs" style="left:1323px;top:285px" width="4" height="13" viewBox="0 0 4 13"><path d="M3.5 0V12M1 3H3.5M1 7H3.5M1 11.5H3.5" stroke="#02aba9" stroke-width="1" fill="none"/></svg>
<div class="abs" style="left:0;top:359px;width:1339px;height:1px;background:#e6e6e6"></div>
<div class="abs td" style="left:0px;top:315px;width:39px;">8</div>
<div class="abs td" style="left:40px;top:315px;width:79px;">liuxin</div>
<div class="abs td" style="left:120px;top:315px;width:79px;">刘鑫</div>
<div class="abs td" style="left:200px;top:315px;width:79px;">平台机构</div>
<div class="abs td" style="left:280px;top:315px;width:79px;">khpz</div>
<div class="abs td" style="left:360px;top:315px;width:79px;">-</div>
<div class="abs td" style="left:440px;top:315px;width:79px;">-</div>
<div class="abs td" style="left:520px;top:315px;width:79px;">-</div>
<div class="abs td" style="left:600px;top:315px;width:79px;text-align:left;padding-left:10px;">企业电…</div>
<div class="abs sw" style="left:720px;top:327px;background:#13ce66"><span style="left:22px"></span></div>
<div class="abs tb" style="left:827px;top:323px;width:56px">查看</div>
<div class="abs tb" style="left:922px;top:323px;width:56px">设置</div>
<div class="abs tb" style="left:1024px;top:323px;width:250px;padding:0"><span class="abs" style="left:0;width:79px;text-align:center">权限设置</span><span class="abs" style="left:79px;top:1px;width:1px;height:26px;background:#80d5d3"></span><span class="abs" style="left:80px;width:79px;text-align:center">密码设置</span><span class="abs" style="left:158px;top:1px;width:1px;height:26px;background:#80d5d3"></span><span class="abs" style="left:159px;width:91px;text-align:center">第三方接入</span></div>
<svg class="abs" style="left:1323px;top:330px" width="4" height="13" viewBox="0 0 4 13"><path d="M3.5 0V12M1 3H3.5M1 7H3.5M1 11.5H3.5" stroke="#02aba9" stroke-width="1" fill="none"/></svg>
<div class="abs" style="left:0;top:404px;width:1339px;height:1px;background:#e6e6e6"></div>
<div class="abs td" style="left:0px;top:360px;width:39px;">9</div>
<div class="abs td" style="left:40px;top:360px;width:79px;">manger</div>
<div class="abs td" style="left:120px;top:360px;width:79px;">管理人甲</div>
<div class="abs td" style="left:200px;top:360px;width:79px;">平台机构</div>
<div class="abs td" style="left:280px;top:360px;width:79px;">guest</div>
<div class="abs td" style="left:360px;top:360px;width:79px;">-</div>
<div class="abs td" style="left:440px;top:360px;width:79px;">-</div>
<div class="abs td" style="left:520px;top:360px;width:79px;">-</div>
<div class="abs td" style="left:600px;top:360px;width:79px;text-align:left;padding-left:10px;">企业电…</div>
<div class="abs sw" style="left:720px;top:372px;background:#13ce66"><span style="left:22px"></span></div>
<div class="abs tb" style="left:827px;top:368px;width:56px">查看</div>
<div class="abs tb" style="left:922px;top:368px;width:56px">设置</div>
<div class="abs tb" style="left:1024px;top:368px;width:250px;padding:0"><span class="abs" style="left:0;width:79px;text-align:center">权限设置</span><span class="abs" style="left:79px;top:1px;width:1px;height:26px;background:#80d5d3"></span><span class="abs" style="left:80px;width:79px;text-align:center">密码设置</span><span class="abs" style="left:158px;top:1px;width:1px;height:26px;background:#80d5d3"></span><span class="abs" style="left:159px;width:91px;text-align:center">第三方接入</span></div>
<svg class="abs" style="left:1323px;top:375px" width="4" height="13" viewBox="0 0 4 13"><path d="M3.5 0V12M1 3H3.5M1 7H3.5M1 11.5H3.5" stroke="#02aba9" stroke-width="1" fill="none"/></svg>
<div class="abs" style="left:0;top:449px;width:1339px;height:1px;background:#e6e6e6"></div>
<div class="abs td" style="left:0px;top:405px;width:39px;">10</div>
<div class="abs td" style="left:40px;top:405px;width:79px;">ls</div>
<div class="abs td" style="left:120px;top:405px;width:79px;">ls</div>
<div class="abs td" style="left:200px;top:405px;width:79px;">平台机构</div>
<div class="abs td" style="left:280px;top:405px;width:79px;">test1</div>
<div class="abs td" style="left:360px;top:405px;width:79px;text-align:left;padding-left:10px;">平台运…</div>
<div class="abs td" style="left:440px;top:405px;width:79px;">-</div>
<div class="abs td" style="left:520px;top:405px;width:79px;">-</div>
<div class="abs td" style="left:600px;top:405px;width:79px;text-align:left;padding-left:10px;">企业电…</div>
<div class="abs sw" style="left:720px;top:417px;background:#13ce66"><span style="left:22px"></span></div>
<div class="abs tb" style="left:827px;top:413px;width:56px">查看</div>
<div class="abs tb" style="left:922px;top:413px;width:56px">设置</div>
<div class="abs tb" style="left:1024px;top:413px;width:250px;padding:0"><span class="abs" style="left:0;width:79px;text-align:center">权限设置</span><span class="abs" style="left:79px;top:1px;width:1px;height:26px;background:#80d5d3"></span><span class="abs" style="left:80px;width:79px;text-align:center">密码设置</span><span class="abs" style="left:158px;top:1px;width:1px;height:26px;background:#80d5d3"></span><span class="abs" style="left:159px;width:91px;text-align:center">第三方接入</span></div>
<svg class="abs" style="left:1323px;top:420px" width="4" height="13" viewBox="0 0 4 13"><path d="M3.5 0V12M1 3H3.5M1 7H3.5M1 11.5H3.5" stroke="#02aba9" stroke-width="1" fill="none"/></svg>
<div class="abs" style="left:119px;top:450px;width:1220px;height:44px;background:#e9e9e9"></div>
<div class="abs" style="left:0;top:494px;width:1339px;height:1px;background:#e6e6e6"></div>
<div class="abs td" style="left:0px;top:450px;width:39px;">11</div>
<div class="abs td" style="left:40px;top:450px;width:79px;text-align:left;padding-left:10px;">duans…</div>
<div class="abs td" style="left:120px;top:450px;width:79px;text-align:left;padding-left:10px;">duans…</div>
<div class="abs td" style="left:200px;top:450px;width:79px;">平台机构</div>
<div class="abs td" style="left:280px;top:450px;width:79px;">guest</div>
<div class="abs td" style="left:360px;top:450px;width:79px;">-</div>
<div class="abs td" style="left:440px;top:450px;width:79px;">-</div>
<div class="abs td" style="left:520px;top:450px;width:79px;">-</div>
<div class="abs td" style="left:600px;top:450px;width:79px;text-align:left;padding-left:10px;">电力运…</div>
<div class="abs sw" style="left:720px;top:462px;background:#13ce66"><span style="left:22px"></span></div>
<div class="abs tb" style="left:827px;top:458px;width:56px">查看</div>
<div class="abs tb" style="left:922px;top:458px;width:56px">设置</div>
<div class="abs tb" style="left:1024px;top:458px;width:250px;padding:0"><span class="abs" style="left:0;width:79px;text-align:center">权限设置</span><span class="abs" style="left:79px;top:1px;width:1px;height:26px;background:#80d5d3"></span><span class="abs" style="left:80px;width:79px;text-align:center">密码设置</span><span class="abs" style="left:158px;top:1px;width:1px;height:26px;background:#80d5d3"></span><span class="abs" style="left:159px;width:91px;text-align:center">第三方接入</span></div>
<svg class="abs" style="left:1323px;top:465px" width="4" height="13" viewBox="0 0 4 13"><path d="M3.5 0V12M1 3H3.5M1 7H3.5M1 11.5H3.5" stroke="#02aba9" stroke-width="1" fill="none"/></svg>
<div class="abs" style="left:0;top:539px;width:1339px;height:1px;background:#e6e6e6"></div>
<div class="abs td" style="left:0px;top:495px;width:39px;">12</div>
<div class="abs td" style="left:40px;top:495px;width:79px;text-align:left;padding-left:10px;">shand…</div>
<div class="abs td" style="left:120px;top:495px;width:79px;text-align:left;padding-left:10px;">shand…</div>
<div class="abs td" style="left:200px;top:495px;width:79px;">平台机构</div>
<div class="abs td" style="left:280px;top:495px;width:79px;">guest</div>
<div class="abs td" style="left:360px;top:495px;width:79px;">-</div>
<div class="abs td" style="left:440px;top:495px;width:79px;">-</div>
<div class="abs td" style="left:520px;top:495px;width:79px;">-</div>
<div class="abs td" style="left:600px;top:495px;width:79px;text-align:left;padding-left:10px;">山东鲁…</div>
<div class="abs sw" style="left:720px;top:507px;background:#13ce66"><span style="left:22px"></span></div>
<div class="abs tb" style="left:827px;top:503px;width:56px">查看</div>
<div class="abs tb" style="left:922px;top:503px;width:56px">设置</div>
<div class="abs tb" style="left:1024px;top:503px;width:250px;padding:0"><span class="abs" style="left:0;width:79px;text-align:center">权限设置</span><span class="abs" style="left:79px;top:1px;width:1px;height:26px;background:#80d5d3"></span><span class="abs" style="left:80px;width:79px;text-align:center">密码设置</span><span class="abs" style="left:158px;top:1px;width:1px;height:26px;background:#80d5d3"></span><span class="abs" style="left:159px;width:91px;text-align:center">第三方接入</span></div>
<svg class="abs" style="left:1323px;top:510px" width="4" height="13" viewBox="0 0 4 13"><path d="M3.5 0V12M1 3H3.5M1 7H3.5M1 11.5H3.5" stroke="#02aba9" stroke-width="1" fill="none"/></svg>
<div class="abs" style="left:0;top:584px;width:1339px;height:1px;background:#e6e6e6"></div>
<div class="abs td" style="left:0px;top:540px;width:39px;">13</div>
<div class="abs td" style="left:40px;top:540px;width:79px;">acreltest</div>
<div class="abs td" style="left:120px;top:540px;width:79px;">acreltest</div>
<div class="abs td" style="left:200px;top:540px;width:79px;">平台机构</div>
<div class="abs td" style="left:280px;top:540px;width:79px;">guest</div>
<div class="abs td" style="left:360px;top:540px;width:79px;">-</div>
<div class="abs td" style="left:440px;top:540px;width:79px;">-</div>
<div class="abs td" style="left:520px;top:540px;width:79px;">-</div>
<div class="abs td" style="left:600px;top:540px;width:79px;text-align:left;padding-left:10px;">企业电…</div>
<div class="abs sw" style="left:720px;top:552px;background:#13ce66"><span style="left:22px"></span></div>
<div class="abs tb" style="left:827px;top:548px;width:56px">查看</div>
<div class="abs tb" style="left:922px;top:548px;width:56px">设置</div>
<div class="abs tb" style="left:1024px;top:548px;width:250px;padding:0"><span class="abs" style="left:0;width:79px;text-align:center">权限设置</span><span class="abs" style="left:79px;top:1px;width:1px;height:26px;background:#80d5d3"></span><span class="abs" style="left:80px;width:79px;text-align:center">密码设置</span><span class="abs" style="left:158px;top:1px;width:1px;height:26px;background:#80d5d3"></span><span class="abs" style="left:159px;width:91px;text-align:center">第三方接入</span></div>
<svg class="abs" style="left:1323px;top:555px" width="4" height="13" viewBox="0 0 4 13"><path d="M3.5 0V12M1 3H3.5M1 7H3.5M1 11.5H3.5" stroke="#02aba9" stroke-width="1" fill="none"/></svg>
<div class="abs" style="left:0;top:629px;width:1339px;height:1px;background:#e6e6e6"></div>
<div class="abs td" style="left:0px;top:585px;width:39px;">14</div>
<div class="abs td" style="left:40px;top:585px;width:79px;">zhonghui</div>
<div class="abs td" style="left:120px;top:585px;width:79px;">中汇</div>
<div class="abs td" style="left:200px;top:585px;width:79px;">平台机构</div>
<div class="abs td" style="left:280px;top:585px;width:79px;">guest</div>
<div class="abs td" style="left:360px;top:585px;width:79px;">-</div>
<div class="abs td" style="left:440px;top:585px;width:79px;">-</div>
<div class="abs td" style="left:520px;top:585px;width:79px;">-</div>
<div class="abs td" style="left:600px;top:585px;width:79px;text-align:left;padding-left:10px;">企业电…</div>
<div class="abs sw" style="left:720px;top:597px;background:#13ce66"><span style="left:22px"></span></div>
<div class="abs tb" style="left:827px;top:593px;width:56px">查看</div>
<div class="abs tb" style="left:922px;top:593px;width:56px">设置</div>
<div class="abs tb" style="left:1024px;top:593px;width:250px;padding:0"><span class="abs" style="left:0;width:79px;text-align:center">权限设置</span><span class="abs" style="left:79px;top:1px;width:1px;height:26px;background:#80d5d3"></span><span class="abs" style="left:80px;width:79px;text-align:center">密码设置</span><span class="abs" style="left:158px;top:1px;width:1px;height:26px;background:#80d5d3"></span><span class="abs" style="left:159px;width:91px;text-align:center">第三方接入</span></div>
<svg class="abs" style="left:1323px;top:600px" width="4" height="13" viewBox="0 0 4 13"><path d="M3.5 0V12M1 3H3.5M1 7H3.5M1 11.5H3.5" stroke="#02aba9" stroke-width="1" fill="none"/></svg>
<div class="abs" style="left:0;top:674px;width:1339px;height:1px;background:#e6e6e6"></div>
<div class="abs td" style="left:0px;top:630px;width:39px;">15</div>
<div class="abs td" style="left:40px;top:630px;width:79px;">testNew</div>
<div class="abs td" style="left:120px;top:630px;width:79px;">测试人丙</div>
<div class="abs td" style="left:200px;top:630px;width:79px;">平台机构</div>
<div class="abs td" style="left:280px;top:630px;width:79px;">guest</div>
<div class="abs td" style="left:360px;top:630px;width:79px;">-</div>
<div class="abs td" style="left:440px;top:630px;width:79px;">-</div>
<div class="abs td" style="left:520px;top:630px;width:79px;">-</div>
<div class="abs td" style="left:600px;top:630px;width:79px;text-align:left;padding-left:10px;">电力运…</div>
<div class="abs sw" style="left:720px;top:642px;background:#c9c9c9"><span style="left:2px"></span></div>
<div class="abs tb" style="left:827px;top:638px;width:56px">查看</div>
<div class="abs tb" style="left:922px;top:638px;width:56px">设置</div>
<div class="abs tb" style="left:1024px;top:638px;width:250px;padding:0"><span class="abs" style="left:0;width:79px;text-align:center">权限设置</span><span class="abs" style="left:79px;top:1px;width:1px;height:26px;background:#80d5d3"></span><span class="abs" style="left:80px;width:79px;text-align:center">密码设置</span><span class="abs" style="left:158px;top:1px;width:1px;height:26px;background:#80d5d3"></span><span class="abs" style="left:159px;width:91px;text-align:center">第三方接入</span></div>
<svg class="abs" style="left:1323px;top:645px" width="4" height="13" viewBox="0 0 4 13"><path d="M3.5 0V12M1 3H3.5M1 7H3.5M1 11.5H3.5" stroke="#02aba9" stroke-width="1" fill="none"/></svg>
<div class="abs" style="left:0;top:719px;width:1339px;height:1px;background:#e6e6e6"></div>
<div class="abs td" style="left:0px;top:675px;width:39px;">16</div>
<div class="abs td" style="left:40px;top:675px;width:79px;">peixun</div>
<div class="abs td" style="left:120px;top:675px;width:79px;">培训</div>
<div class="abs td" style="left:200px;top:675px;width:79px;">平台机构</div>
<div class="abs td" style="left:280px;top:675px;width:79px;">guest</div>
<div class="abs td" style="left:360px;top:675px;width:79px;">-</div>
<div class="abs td" style="left:440px;top:675px;width:79px;">-</div>
<div class="abs td" style="left:520px;top:675px;width:79px;">-</div>
<div class="abs td" style="left:600px;top:675px;width:79px;text-align:left;padding-left:10px;">培训企…</div>
<div class="abs sw" style="left:720px;top:687px;background:#13ce66"><span style="left:22px"></span></div>
<div class="abs tb" style="left:827px;top:683px;width:56px">查看</div>
<div class="abs tb" style="left:922px;top:683px;width:56px">设置</div>
<div class="abs tb" style="left:1024px;top:683px;width:250px;padding:0"><span class="abs" style="left:0;width:79px;text-align:center">权限设置</span><span class="abs" style="left:79px;top:1px;width:1px;height:26px;background:#80d5d3"></span><span class="abs" style="left:80px;width:79px;text-align:center">密码设置</span><span class="abs" style="left:158px;top:1px;width:1px;height:26px;background:#80d5d3"></span><span class="abs" style="left:159px;width:91px;text-align:center">第三方接入</span></div>
<svg class="abs" style="left:1323px;top:690px" width="4" height="13" viewBox="0 0 4 13"><path d="M3.5 0V12M1 3H3.5M1 7H3.5M1 11.5H3.5" stroke="#02aba9" stroke-width="1" fill="none"/></svg>
<div class="abs" style="left:0;top:764px;width:1339px;height:1px;background:#e6e6e6"></div>
<div class="abs td" style="left:0px;top:720px;width:39px;">17</div>
<div class="abs td" style="left:40px;top:720px;width:79px;text-align:left;padding-left:10px;">zhong…</div>
<div class="abs td" style="left:120px;top:720px;width:79px;text-align:left;padding-left:10px;">zhong…</div>
<div class="abs td" style="left:200px;top:720px;width:79px;">平台机构</div>
<div class="abs td" style="left:280px;top:720px;width:79px;">guest</div>
<div class="abs td" style="left:360px;top:720px;width:79px;">-</div>
<div class="abs td" style="left:440px;top:720px;width:79px;">-</div>
<div class="abs td" style="left:520px;top:720px;width:79px;">-</div>
<div class="abs td" style="left:600px;top:720px;width:79px;text-align:left;padding-left:10px;">企业电…</div>
<div class="abs sw" style="left:720px;top:732px;background:#13ce66"><span style="left:22px"></span></div>
<div class="abs tb" style="left:827px;top:728px;width:56px">查看</div>
<div class="abs tb" style="left:922px;top:728px;width:56px">设置</div>
<div class="abs tb" style="left:1024px;top:728px;width:250px;padding:0"><span class="abs" style="left:0;width:79px;text-align:center">权限设置</span><span class="abs" style="left:79px;top:1px;width:1px;height:26px;background:#80d5d3"></span><span class="abs" style="left:80px;width:79px;text-align:center">密码设置</span><span class="abs" style="left:158px;top:1px;width:1px;height:26px;background:#80d5d3"></span><span class="abs" style="left:159px;width:91px;text-align:center">第三方接入</span></div>
<svg class="abs" style="left:1323px;top:735px" width="4" height="13" viewBox="0 0 4 13"><path d="M3.5 0V12M1 3H3.5M1 7H3.5M1 11.5H3.5" stroke="#02aba9" stroke-width="1" fill="none"/></svg>
<div class="abs" style="left:0;top:809px;width:1339px;height:1px;background:#e6e6e6"></div>
<div class="abs td" style="left:0px;top:765px;width:39px;">18</div>
<div class="abs td" style="left:40px;top:765px;width:79px;text-align:left;padding-left:10px;">zhong…</div>
<div class="abs td" style="left:120px;top:765px;width:79px;text-align:left;padding-left:10px;">zhong…</div>
<div class="abs td" style="left:200px;top:765px;width:79px;">平台机构</div>
<div class="abs td" style="left:280px;top:765px;width:79px;">guest</div>
<div class="abs td" style="left:360px;top:765px;width:79px;">-</div>
<div class="abs td" style="left:440px;top:765px;width:79px;">-</div>
<div class="abs td" style="left:520px;top:765px;width:79px;">-</div>
<div class="abs td" style="left:600px;top:765px;width:79px;text-align:left;padding-left:10px;">企业电…</div>
<div class="abs sw" style="left:720px;top:777px;background:#13ce66"><span style="left:22px"></span></div>
<div class="abs tb" style="left:827px;top:773px;width:56px">查看</div>
<div class="abs tb" style="left:922px;top:773px;width:56px">设置</div>
<div class="abs tb" style="left:1024px;top:773px;width:250px;padding:0"><span class="abs" style="left:0;width:79px;text-align:center">权限设置</span><span class="abs" style="left:79px;top:1px;width:1px;height:26px;background:#80d5d3"></span><span class="abs" style="left:80px;width:79px;text-align:center">密码设置</span><span class="abs" style="left:158px;top:1px;width:1px;height:26px;background:#80d5d3"></span><span class="abs" style="left:159px;width:91px;text-align:center">第三方接入</span></div>
<svg class="abs" style="left:1323px;top:780px" width="4" height="13" viewBox="0 0 4 13"><path d="M3.5 0V12M1 3H3.5M1 7H3.5M1 11.5H3.5" stroke="#02aba9" stroke-width="1" fill="none"/></svg>
<div class="abs" style="left:39px;top:0;width:1px;height:793px;background:#e6e6e6"></div>
<div class="abs" style="left:119px;top:0;width:1px;height:793px;background:#e6e6e6"></div>
<div class="abs" style="left:199px;top:0;width:1px;height:793px;background:#e6e6e6"></div>
<div class="abs" style="left:279px;top:0;width:1px;height:793px;background:#e6e6e6"></div>
<div class="abs" style="left:359px;top:0;width:1px;height:793px;background:#e6e6e6"></div>
<div class="abs" style="left:439px;top:0;width:1px;height:793px;background:#e6e6e6"></div>
<div class="abs" style="left:519px;top:0;width:1px;height:793px;background:#e6e6e6"></div>
<div class="abs" style="left:599px;top:0;width:1px;height:793px;background:#e6e6e6"></div>
<div class="abs" style="left:679px;top:0;width:1px;height:793px;background:#e6e6e6"></div>
<div class="abs" style="left:799px;top:0;width:1px;height:793px;background:#e6e6e6"></div>
<div class="abs" style="left:909px;top:0;width:1px;height:793px;background:#e6e6e6"></div>
<div class="abs" style="left:989px;top:0;width:1px;height:793px;background:#e6e6e6"></div>
<div class="abs" style="left:1307px;top:0;width:1px;height:793px;background:#e6e6e6"></div>
</div>
<div class="abs" style="left:1880px;top:216px;width:12px;height:793px;background:#fff"></div>
<div class="abs" style="left:1880px;top:216px;width:12px;height:698px;background:#c8c8c8"></div>
<div class="abs" style="left:553px;top:1009px;width:1339px;height:12px;background:#fff"></div>
<div class="abs" style="left:553px;top:1009px;width:1268px;height:12px;background:#c8c8c8"></div>
<div class="abs" style="left:1303px;top:1035px;font-size:13px;line-height:20px;color:#333;white-space:nowrap">共 857 条</div>
<div class="abs" style="left:1373px;top:1032px;width:100px;height:28px;border:1px solid #dcdfe6;border-radius:3px;font-size:14px;line-height:26px;color:#333;padding-left:17px">20条/页<svg class="abs" style="left:83px;top:10px" width="9" height="6" viewBox="0 0 9 6"><path d="M0.5 0.8 L4.5 4.8 L8.5 0.8" stroke="#c0c4cc" stroke-width="1" fill="none"/></svg></div>
<svg class="abs" style="left:1504px;top:1040px" width="8" height="11" viewBox="0 0 8 11"><path d="M6.5 0.8 L1.5 5.5 L6.5 10.2" stroke="#333" stroke-width="1.15" fill="none"/></svg>
<div class="abs" style="left:1533px;top:1032px;width:30px;height:28px;border-radius:2px;background:#02aba9;color:#fff;font-weight:bold;font-size:14px;line-height:27px;text-align:center">1</div>
<svg class="abs" style="left:1780px;top:1042px" width="16" height="8" viewBox="1780 1042 16 8"><circle cx="1783.5" cy="1045.9" r="1.3" fill="#222"/><circle cx="1787.8" cy="1045.9" r="1.3" fill="#222"/><circle cx="1792.1" cy="1045.9" r="1.3" fill="#222"/></svg>
<div class="abs" style="left:1573px;top:1032px;width:30px;height:28px;color:#111;font-weight:bold;font-size:14px;line-height:26px;text-align:center"><span style="display:inline-block;transform:scaleX(0.88)">2</span></div>
<div class="abs" style="left:1613px;top:1032px;width:30px;height:28px;color:#111;font-weight:bold;font-size:14px;line-height:26px;text-align:center"><span style="display:inline-block;transform:scaleX(0.88)">3</span></div>
<div class="abs" style="left:1653px;top:1032px;width:30px;height:28px;color:#111;font-weight:bold;font-size:14px;line-height:26px;text-align:center"><span style="display:inline-block;transform:scaleX(0.88)">4</span></div>
<div class="abs" style="left:1693px;top:1032px;width:30px;height:28px;color:#111;font-weight:bold;font-size:14px;line-height:26px;text-align:center"><span style="display:inline-block;transform:scaleX(0.88)">5</span></div>
<div class="abs" style="left:1733px;top:1032px;width:30px;height:28px;color:#111;font-weight:bold;font-size:14px;line-height:26px;text-align:center"><span style="display:inline-block;transform:scaleX(0.88)">6</span></div>
<div class="abs" style="left:1773px;top:1032px;width:30px;height:28px;color:#111;font-weight:bold;font-size:14px;line-height:26px;text-align:center"><span style="display:inline-block;transform:scaleX(0.88)"></span></div>
<div class="abs" style="left:1813px;top:1032px;width:30px;height:28px;color:#111;font-weight:bold;font-size:14px;line-height:26px;text-align:center"><span style="display:inline-block;transform:scaleX(0.88)">43</span></div>
<svg class="abs" style="left:1864px;top:1040px" width="8" height="11" viewBox="0 0 8 11"><path d="M1.5 0.8 L6.5 5.5 L1.5 10.2" stroke="#333" stroke-width="1.15" fill="none"/></svg>
</body></html>
